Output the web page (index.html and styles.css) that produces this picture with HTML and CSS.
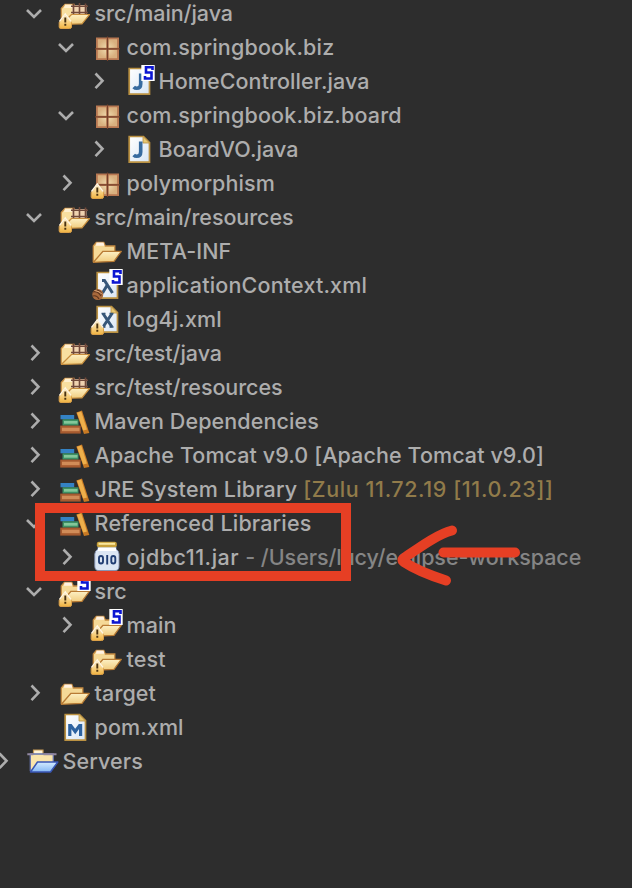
FILE: index.html
```html
<!DOCTYPE html>
<html lang="en">
<head>
<meta charset="utf-8">
<title>Package Explorer</title>
<link rel="stylesheet" href="styles.css">
</head>
<body>
<svg class="defs" aria-hidden="true">
  <defs>
    <linearGradient id="gold" x1="0" y1="0" x2="0" y2="1"><stop offset="0" stop-color="#fdf0c4"/><stop offset="1" stop-color="#f0cb7c"/></linearGradient>
    <linearGradient id="paper" x1="0" y1="0" x2="1" y2="1"><stop offset="0" stop-color="#ffffff"/><stop offset="1" stop-color="#d8e6f5"/></linearGradient>
    <linearGradient id="warnfill" x1="0" y1="0" x2="0" y2="1"><stop offset="0" stop-color="#fff6dc"/><stop offset=".5" stop-color="#f9d58a"/><stop offset="1" stop-color="#f0b341"/></linearGradient>
    <radialGradient id="cell"><stop offset="0" stop-color="#f0dfb2"/><stop offset="1" stop-color="#d9b07f"/></radialGradient>
    <linearGradient id="sky" x1="0" y1="0" x2="0" y2="1"><stop offset="0" stop-color="#d4ecff"/><stop offset="1" stop-color="#85b8f5"/></linearGradient>
  </defs>
  <symbol id="open" viewBox="0 0 32 34"><path d="M7 13l7 7 7-7"/></symbol>
  <symbol id="closed" viewBox="0 0 32 34"><path d="M11.5 8.5l7 7.3-7 7.3"/></symbol>
  <symbol id="folder" viewBox="0 0 34 34">
    <path d="M3.3 27V11l3-3.5h7.500l1.500 3.500h9.500v6" fill="#f5d997" stroke="#c58b42" stroke-width="1.300"/>
    <path d="M6.500 7.500h7l1 3.300H6z" fill="#fff2e2"/>
    <path d="M3.400 27.300L13 16.300h18.300L24 26.300z" fill="url(#gold)" stroke="#b87b35" stroke-width="1.300" stroke-linejoin="round"/>
  </symbol>
  <symbol id="source" viewBox="0 0 34 34">
    <path d="M3.300 27V11.500L7 7.500h9v10h9v4" fill="#f8dfa0" stroke="#cf9548" stroke-width="1.300"/>
    <path d="M7 7.500h7l1 3.500H6z" fill="#fff0d0"/>
    <path d="M14 8h14.500v11H14z" fill="#efd2b0"/>
    <path d="M15.500 6.500v12.500M21.500 6v13M27.500 6.500v12.500M13 9.300h17M13 15.500h17" stroke="#71493a" stroke-width="1.600"/>
    <path d="M3.400 27.500L13.500 17.500H31.500L24 26.800z" fill="url(#gold)" stroke="#c88e3e" stroke-width="1.200" stroke-linejoin="round"/>
  </symbol>
  <symbol id="package" viewBox="0 0 34 34">
    <path d="M6 6.500h23v22.500H6z" fill="#b87852"/>
    <path d="M7.800 8.300h8.400v8.400H7.800zM18.700 8.300h8.400v8.400h-8.400zM7.800 19h8.400v8.200H7.800zM18.700 19h8.400v8.200h-8.400z" fill="url(#cell)"/>
    <path d="M17.500 5.500v24.500M5 17.800h25" stroke="#75402a" stroke-width="1.200"/>
  </symbol>
  <symbol id="page" viewBox="0 0 34 34">
    <path d="M7.200 3.500h14.300l6 6v19.700H7.200z" fill="url(#paper)" stroke="#ba9142" stroke-width="1.700"/>
    <path d="M21 3.500v6.500h6.500z" fill="#e7c873" stroke="#ba9142" stroke-width=".8"/>
  </symbol>
  <symbol id="java" viewBox="0 0 34 34">
    <use href="#page"/>
    <path d="M18.700 8.500v10.500q0 4.300-4 4.300-1.800 0-3-1.300" fill="none" stroke="#376b9f" stroke-width="3.600"/>
  </symbol>
  <symbol id="xml" viewBox="0 0 34 34">
    <use href="#page"/>
    <path d="M13 10.500l9 13.500M22 10.500L13 24" fill="none" stroke="#375779" stroke-width="3"/>
    <path d="M11.500 10.500h4M19.500 10.500h4M11.500 24h4M19.500 24h4" stroke="#375779" stroke-width="1.400"/>
  </symbol>
  <symbol id="bean" viewBox="0 0 34 34">
    <use href="#page"/>
    <path d="M12 11.500h2.500L22.500 24M17 16.500L12.500 24" fill="none" stroke="#375779" stroke-width="3"/>
    <circle cx="7.800" cy="25.500" r="5.500" fill="#a8693c"/>
    <path d="M3 23q4.500-1.500 8 4M3 27q4-1 6 3M7 21q4 1 5 5" fill="none" stroke="#5f341c" stroke-width="1.100"/>
    <path d="M4.500 21.500q5 .5 8 4" fill="none" stroke="#dca77a" stroke-width="1"/>
  </symbol>
  <symbol id="maven" viewBox="0 0 34 34">
    <use href="#page"/>
    <path d="M11.800 25V14.500h1l4.400 6 4.400-6h1V25" fill="none" stroke="#2c62a0" stroke-width="3.200"/>
  </symbol>
  <symbol id="books" viewBox="0 0 34 34">
    <path d="M2.500 10h13.700v4.300H2.500z" fill="#3482c4"/>
    <path d="M4.500 14.300h16v6.300h-16z" fill="#3d9164"/><path d="M6 16h13.500v2.700H6z" fill="#83c79a"/>
    <path d="M2.200 20.600h20.500v8H2.200z" fill="#a65a2f"/><path d="M4 22.700h17.500v3.500H4z" fill="#d18c58"/>
    <path d="M18.300 7.500l5.700-2 7.300 22.500-5.300 1z" fill="#c87a24"/><path d="M19 7.800l4.200-1.400 5.800 18-3.800 1.200z" fill="#eeb04b"/>
  </symbol>
  <symbol id="jar" viewBox="0 0 34 34">
    <path d="M8 5.500h18v2.500q3 2 3 5v12q0 4.500-3.700 4.500H8.500q-3.700 0-3.700-4.500V13q0-3 3.200-5z" fill="#dce6f3" stroke="#8795b6" stroke-width=".9"/>
    <path d="M8 7h18v3H8z" fill="#fff"/>
    <rect x="6.800" y=".8" width="20" height="5.500" rx="2" fill="#c7a03a"/><path d="M8.500 2.800h16.500" stroke="#f9e69c" stroke-width="2"/>
    <rect x="9" y="15" width="4" height="7.500" rx="2" fill="none" stroke="#213e73" stroke-width="1.900"/><path d="M17.200 14v9.500" stroke="#213e73" stroke-width="1.900"/><rect x="21.300" y="15" width="4" height="7.500" rx="2" fill="none" stroke="#213e73" stroke-width="1.900"/>
  </symbol>
  <symbol id="project" viewBox="0 0 34 34">
    <path d="M7.500 9V5h9.500v4" fill="#fff4d7" stroke="#c79b58" stroke-width="1.200"/>
    <path d="M4.300 26V9h23v10" fill="#f9e4aa" stroke="#6372ad" stroke-width="1.300"/>
    <path d="M1.300 9.300h6M17.500 9.300h13" stroke="#9187a0" stroke-width="2"/>
    <path d="M4.500 27L11.500 17h20.300L24.500 27z" fill="url(#sky)" stroke="#3856b5" stroke-width="1.500" stroke-linejoin="round"/>
  </symbol>
  <symbol id="warn" viewBox="0 0 34 34">
    <path d="M7.300 17L1.200 25.500V30q0 1.500 1.800 1.500h8.600q1.900 0 1.900-1.500v-4.500z" fill="url(#warnfill)" stroke="#dba048" stroke-width="1" stroke-linejoin="round"/>
    <path d="M1.500 24.500L7.300 16.800 13 24.500" fill="none" stroke="#fff7e5" stroke-width="1.300"/>
    <path d="M7.300 20.500v5M7.300 26.800v1.900" stroke="#4a3210" stroke-width="1.900"/>
  </symbol>
  <symbol id="spring" viewBox="0 0 34 34">
    <path d="M19.300 0h13.400v16H19.300z" fill="#fff"/>
    <path d="M30.500 5V2.200h-6.500v5.300h5.500v6h-6.500V11" fill="none" stroke="#0c16d2" stroke-width="2.600"/>
  </symbol>
</svg>

<main class="explorer">
  <ul class="tree">
    <li class="row l1"><svg class="twisty"><use href="#open"/></svg><svg class="icon"><use href="#source"/><use href="#warn"/></svg><span class="label srcpath">src/main/java</span></li>
    <li class="row l2"><svg class="twisty"><use href="#open"/></svg><svg class="icon"><use href="#package"/></svg><span class="label pkg">com.springbook.biz</span></li>
    <li class="row l3"><svg class="twisty"><use href="#closed"/></svg><svg class="icon"><use href="#java"/><use href="#spring"/></svg><span class="label">HomeController.java</span></li>
    <li class="row l2"><svg class="twisty"><use href="#open"/></svg><svg class="icon"><use href="#package"/></svg><span class="label pkg">com.springbook.biz.board</span></li>
    <li class="row l3"><svg class="twisty"><use href="#closed"/></svg><svg class="icon"><use href="#java"/></svg><span class="label">BoardVO.java</span></li>
    <li class="row l2"><svg class="twisty"><use href="#closed"/></svg><svg class="icon"><use href="#package"/><use href="#warn"/></svg><span class="label">polymorphism</span></li>
    <li class="row l1"><svg class="twisty"><use href="#open"/></svg><svg class="icon"><use href="#source"/><use href="#warn"/></svg><span class="label srcpath">src/main/resources</span></li>
    <li class="row l2"><svg class="twisty"></svg><svg class="icon"><use href="#folder"/></svg><span class="label">META-INF</span></li>
    <li class="row l2"><svg class="twisty"></svg><svg class="icon"><use href="#bean"/><use href="#spring"/></svg><span class="label pkg">applicationContext.xml</span></li>
    <li class="row l2"><svg class="twisty"></svg><svg class="icon"><use href="#xml"/><use href="#warn"/></svg><span class="label">log4j.xml</span></li>
    <li class="row l1"><svg class="twisty"><use href="#closed"/></svg><svg class="icon"><use href="#source"/></svg><span class="label srcpath">src/test/java</span></li>
    <li class="row l1"><svg class="twisty"><use href="#closed"/></svg><svg class="icon"><use href="#source"/><use href="#warn"/></svg><span class="label srcpath">src/test/resources</span></li>
    <li class="row l1"><svg class="twisty"><use href="#closed"/></svg><svg class="icon"><use href="#books"/></svg><span class="label">Maven Dependencies</span></li>
    <li class="row l1"><svg class="twisty"><use href="#closed"/></svg><svg class="icon"><use href="#books"/></svg><span class="label">Apache Tomcat v9.0 [Apache Tomcat v9.0]</span></li>
    <li class="row l1"><svg class="twisty"><use href="#closed"/></svg><svg class="icon"><use href="#books"/></svg><span class="label"><span class="pkg">JRE System Library </span><span class="version">[Zulu 11.72.19 [11.0.23]]</span></span></li>
    <li class="row l1"><svg class="twisty"><use href="#open"/></svg><svg class="icon"><use href="#books"/></svg><span class="label pkg">Referenced Libraries</span></li>
    <li class="row l2"><svg class="twisty"><use href="#closed"/></svg><svg class="icon"><use href="#jar"/></svg><span class="label"><span class="jar">ojdbc11.jar </span><span class="path">- /Users/lucy/eclipse-workspace</span></span></li>
    <li class="row l1"><svg class="twisty"><use href="#open"/></svg><svg class="icon"><use href="#folder"/><use href="#warn"/><use href="#spring"/></svg><span class="label">src</span></li>
    <li class="row l2"><svg class="twisty"><use href="#closed"/></svg><svg class="icon"><use href="#folder"/><use href="#warn"/><use href="#spring"/></svg><span class="label">main</span></li>
    <li class="row l2"><svg class="twisty"></svg><svg class="icon"><use href="#folder"/><use href="#warn"/></svg><span class="label">test</span></li>
    <li class="row l1"><svg class="twisty"><use href="#closed"/></svg><svg class="icon"><use href="#folder"/></svg><span class="label">target</span></li>
    <li class="row l1"><svg class="twisty"></svg><svg class="icon"><use href="#maven"/></svg><span class="label">pom.xml</span></li>
    <li class="row l0"><svg class="twisty"><use href="#closed"/></svg><svg class="icon"><use href="#project"/></svg><span class="label">Servers</span></li>
  </ul>
  <div class="highlight"></div>
  <svg class="arrow" viewBox="0 0 130 70"><path d="M58 10.500C44 14 26 27 10 38Q7 40 10 42C22 50 35 55 52 60.500"/><path d="M49.500 32.500H121"/></svg>
</main>
</body>
</html>
```
FILE: styles.css
```css
* { box-sizing: border-box; }
body {
  margin: 0;
  background: #2d2d2d;
  color: #adadad;
  font: 500 21.5px/33px Inter, "Liberation Sans", sans-serif;
  letter-spacing: 0.09px;
}
.defs { position: absolute; width: 0; height: 0; }
.explorer {
  position: relative;
  height: 888px;
  overflow: hidden;
}
.tree {
  list-style: none;
  margin: -3px 0 0;
  padding: 0;
}
.row {
  display: flex;
  height: 34px;
  white-space: pre;
}
.l0 { margin-left: -12px; }
.l1 { margin-left: 20px; }
.l2 { margin-left: 52px; }
.l3 { margin-left: 84px; }
.twisty {
  flex: none;
  width: 32px;
  height: 34px;
  fill: none;
  stroke: #adadad;
  stroke-width: 2.6px;
}
.icon {
  flex: none;
  width: 34px;
  height: 34px;
  margin: 0 2.6px 0 6px;
}
.pkg { letter-spacing: 0.17px; }
.srcpath { letter-spacing: -0.06px; }
.jar { letter-spacing: 0.5px; }
.version { color: #917b4a; letter-spacing: 0.6px; }
.path { color: #858585; letter-spacing: -0.06px; }
.highlight {
  position: absolute;
  left: 35px;
  top: 503px;
  width: 316px;
  height: 78px;
  border: 10px solid #e63f24;
}
.arrow {
  position: absolute;
  left: 394px;
  top: 520px;
  width: 130px;
  height: 70px;
  fill: none;
  stroke: #e63f24;
  stroke-width: 10px;
  stroke-linecap: round;
  stroke-linejoin: round;
}
```
